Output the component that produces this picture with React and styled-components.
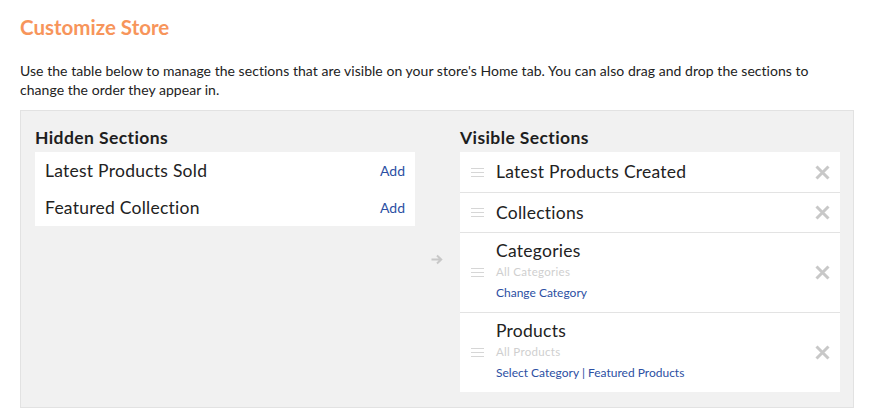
import React from 'react'
import styled, { createGlobalStyle } from 'styled-components'

// STYLES //
const GlobalStyle = createGlobalStyle`
  body {
    margin: 0;
    background: #fff;
    font-family: Lato, "Open Sans", Arial, sans-serif;
    color: #222;
  }
`;
const Page = styled.div`
  padding: 15px 0 0 20px;
`;
const Title = styled.h1`
  margin: 0;
  font-size: 20.5px;
  line-height: 24px;
  font-weight: 700;
  color: #f7955b;
`;
const Intro = styled.p`
  margin: 22px 0 0;
  font-size: 14px;
  line-height: 19px;
  letter-spacing: 0.04px;
  width: 810px;
`;
const Panel = styled.div`
  margin-top: 11px;
  width: 834px;
  background: #f1f1f1;
  border: 1px solid #e2e2e2;
  padding: 16px 13px 15px 14px;
  box-sizing: border-box;
  display: grid;
  grid-template-columns: 380px 1fr 380px;
`;
const Column = styled.div`
  display: flex;
  flex-direction: column;
`;
const Heading = styled.h2`
  margin: 0 0 3px;
  font-size: 17.5px;
  line-height: 22px;
  letter-spacing: 0.4px;
  font-weight: 700;
  color: #1e1e1e;
`;
const List = styled.div`
  background: #fff;
`;
const HiddenRow = styled.div`
  display: flex;
  align-items: center;
  justify-content: space-between;
  height: 37px;
  padding: 0 10px;
  font-size: 17.5px;
  letter-spacing: 0.25px;
`;
const AddLink = styled.a`
  font-size: 14px;
  letter-spacing: 0;
  color: #2c4fa3;
  cursor: pointer;
`;
const ArrowCell = styled.div`
  display: flex;
  align-items: center;
  justify-content: center;
  padding-right: 2px;
`;
const VisibleRow = styled.div`
  display: flex;
  align-items: center;
  min-height: 40px;
  padding: ${p => (p.$tall ? '8px 10px 9px 11px' : '0 10px 0 11px')};
  box-sizing: border-box;
  border-top: ${p => (p.$first ? 'none' : '1px solid #e3e3e3')};
`;
const Handle = styled.div`
  width: 13px;
  display: flex;
  flex-direction: column;
  gap: 3px;
  margin-right: 12px;
  & span {
    display: block;
    height: 1px;
    background: #d6d6d6;
  }
`;
const Body = styled.div`
  flex: 1;
`;
const RowTitle = styled.div`
  font-size: 17.5px;
  line-height: 20px;
  letter-spacing: 0.25px;
`;
const Sub = styled.div`
  font-size: 11.5px;
  line-height: 21px;
  letter-spacing: 0.3px;
  color: #cfcfcf;
`;
const Links = styled.div`
  font-size: 12px;
  line-height: 21px;
  color: #2c4fa3;
  & a {
    cursor: pointer;
  }
`;
const Remove = styled.button`
  border: none;
  background: none;
  padding: 0;
  display: flex;
  cursor: pointer;
`;

// COMPONENT //
const hidden = ['Latest Products Sold', 'Featured Collection'];

const visible = [
  { name: 'Latest Products Created' },
  { name: 'Collections' },
  { name: 'Categories', sub: 'All Categories', links: ['Change Category'] },
  { name: 'Products', sub: 'All Products', links: ['Select Category', 'Featured Products'] },
];

const CloseIcon = () => (
  <svg width="15" height="15" viewBox="0 0 15 15">
    <path d="M1.5 1.5L13.5 13.5M13.5 1.5L1.5 13.5" stroke="#c8c8c8" strokeWidth="3" strokeLinecap="butt" />
  </svg>
);

const ArrowIcon = () => (
  <svg width="12" height="11" viewBox="0 0 12 11">
    <path d="M0.5 5.5H10M6 1.5L10.2 5.5L6 9.5" stroke="#c8c8c8" strokeWidth="2" fill="none" />
  </svg>
);

const App = () => {
  return (
    <Page>
      <GlobalStyle />
      <Title>Customize Store</Title>
      <Intro>
        Use the table below to manage the sections that are visible on your store's Home tab. You can also drag and drop the sections to change the order they appear in.
      </Intro>
      <Panel>
        <Column>
          <Heading>Hidden Sections</Heading>
          <List>
            {hidden.map(name => (
              <HiddenRow key={name}>
                <span>{name}</span>
                <AddLink>Add</AddLink>
              </HiddenRow>
            ))}
          </List>
        </Column>
        <ArrowCell>
          <ArrowIcon />
        </ArrowCell>
        <Column>
          <Heading>Visible Sections</Heading>
          <List>
            {visible.map((s, i) => (
              <VisibleRow key={s.name} $first={i === 0} $tall={!!s.sub}>
                <Handle>
                  <span />
                  <span />
                  <span />
                </Handle>
                <Body>
                  <RowTitle>{s.name}</RowTitle>
                  {s.sub && <Sub>{s.sub}</Sub>}
                  {s.links && (
                    <Links>
                      {s.links.map((l, j) => (
                        <React.Fragment key={l}>
                          {j > 0 && ' | '}
                          <a>{l}</a>
                        </React.Fragment>
                      ))}
                    </Links>
                  )}
                </Body>
                <Remove>
                  <CloseIcon />
                </Remove>
              </VisibleRow>
            ))}
          </List>
        </Column>
      </Panel>
    </Page>
  );
};

export default App;
